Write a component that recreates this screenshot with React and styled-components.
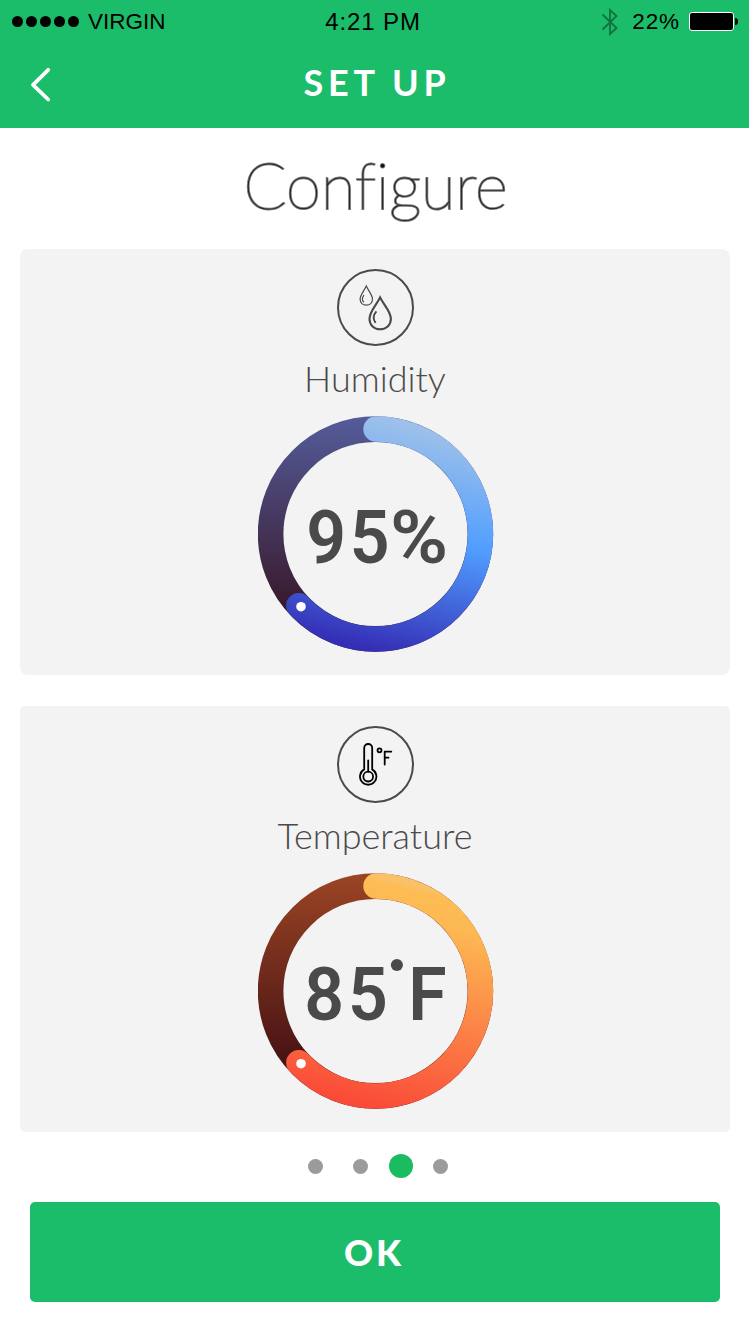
import React from "react";
import styled, { createGlobalStyle } from "styled-components";

const GREEN = "#1bbc6a";

const GlobalStyle = createGlobalStyle`
  * { box-sizing: border-box; }
  body { margin: 0; background: #fff; font-family: Lato, "Liberation Sans", sans-serif; }
`;

const Screen = styled.main`
  display: flex;
  flex-direction: column;
  width: 750px;
  height: 1334px;
  overflow: hidden;
  background: #fff;
`;

const Header = styled.header`
  height: 128px;
  width: 749px;
  background: ${GREEN};
`;

const StatusBar = styled.div`
  display: grid;
  grid-template-columns: 1fr auto 1fr;
  align-items: center;
  height: 43px;
  padding: 0 11px 0 12px;
  font-family: "Liberation Sans", Arial, sans-serif;
  font-size: 22.5px;
  line-height: 43px;
  color: #000;
`;

const StatusGroup = styled.div`
  display: flex;
  align-items: center;
  justify-content: ${(p) => (p.$end ? "flex-end" : "flex-start")};
`;

const Signal = styled.div`
  display: flex;
  gap: 3px;
  margin-right: 9px;
`;

const SignalDot = styled.i`
  width: 11px;
  height: 11px;
  border-radius: 50%;
  background: #000;
`;

const StatusText = styled.span`
  letter-spacing: ${(p) => p.$spacing || 0}px;
  margin-right: ${(p) => p.$after || 0}px;
`;

const Clock = styled(StatusText)`
  padding-right: 4px;
  font-size: 24px;
`;

const Battery = styled.div`
  width: 45px;
  height: 19px;
  border: 1px solid #fff;
  border-radius: 3px;
  background: #000;
`;

const BatteryTip = styled.div`
  width: 3px;
  height: 7px;
  margin-left: 1px;
  border-radius: 0 3px 3px 0;
  background: #000;
`;

const NavBar = styled.div`
  display: grid;
  grid-template-columns: 60px 1fr 60px;
  align-items: center;
  height: 83px;
`;

const BackButton = styled.button`
  display: flex;
  padding: 0 0 0 29px;
  border: 0;
  background: none;
`;

const NavTitle = styled.h1`
  margin: 0;
  padding: 0 0 5px 5px;
  color: #fff;
  font-size: 36px;
  font-weight: 700;
  line-height: 44px;
  letter-spacing: 4.7px;
  text-align: center;
`;

const Heading = styled.h2`
  height: 121px;
  margin: 0;
  padding-left: 1px;
  color: #101010;
  font-size: 63.3px;
  font-weight: 100;
  font-variant-ligatures: none;
  line-height: 114px;
  text-align: center;
  -webkit-text-stroke: 2px #747474;
  paint-order: stroke fill;
`;

const Cards = styled.section`
  display: flex;
  flex-direction: column;
  gap: 31px;
  padding: 0 20px;
`;

const Card = styled.article`
  display: flex;
  flex-direction: column;
  align-items: center;
  height: 426px;
  padding: 20px 0 0 1px;
  border-radius: ${(p) => p.$radius}px;
  background: #f3f3f3;
`;

const IconCircle = styled.div`
  width: 77px;
  height: 77px;
  border: 2px solid #4a4a4a;
  border-radius: 50%;
  svg { display: block; }
`;

const Label = styled.h3`
  height: 70px;
  margin: 0;
  padding-right: 1px;
  color: #4a4a4a;
  font-size: 36px;
  font-weight: 300;
  line-height: 64px;
`;

const Dial = styled.div`
  display: grid;
  width: 236px;
  height: 236px;
  place-items: center;
  > * { grid-area: 1 / 1; }
`;

const Value = styled.div`
  display: flex;
  padding: 5px 0 0 4px;
  color: #4a4a4a;
  font-family: Roboto, "Liberation Sans", sans-serif;
  font-size: 75px;
  font-weight: 600;
  line-height: 80px;
  letter-spacing: 4px;
  transform: scaleX(0.93);
`;

const Percent = styled.span`
  margin: 0 3px 0 -4px;
  transform: scaleX(1.13);
  transform-origin: left;
`;

const Degree = styled.i`
  width: 13px;
  height: 12px;
  margin: 5px 6px 0 -1px;
  border-radius: 50%;
  background: #4a4a4a;
`;

const Pager = styled.nav`
  display: flex;
  align-items: center;
  height: 70px;
  padding: 0 0 2px 308px;
`;

const PageDot = styled.i`
  width: ${(p) => (p.$active ? 24 : 15)}px;
  height: ${(p) => (p.$active ? 24 : 15)}px;
  margin-right: ${(p) => p.$gap}px;
  border-radius: 50%;
  background: ${(p) => (p.$active ? "#1bbc60" : "#9b9b9b")};
`;

const OkButton = styled.button`
  height: 100px;
  margin: 0 30px;
  padding: 0 2px 0 0;
  border: 0;
  border-radius: 5px;
  background: ${GREEN};
  color: #fff;
  font-family: Lato, sans-serif;
  font-size: 36px;
  font-weight: 900;
  letter-spacing: 3px;
`;

function Gauge({ id, track, progress, children }) {
  return (
    <Dial>
      <svg width="236" height="236" viewBox="0 0 236 236">
        <defs>
          <linearGradient id={id + "t"} gradientUnits="userSpaceOnUse" x1="118" y1="0" x2="118" y2="195">
            <stop offset="0" stopColor={track[0]} />
            <stop offset="1" stopColor={track[1]} />
          </linearGradient>
          <linearGradient id={id + "p"} gradientUnits="userSpaceOnUse" x1="146" y1="9" x2="93" y2="230">
            {progress.map(([offset, color]) => (
              <stop key={offset} offset={offset} stopColor={color} />
            ))}
          </linearGradient>
        </defs>
        <circle cx="117.5" cy="118" r="104.9" fill="none" stroke={`url(#${id}t)`} strokeWidth="25.6" />
        <path
          d="M118 13A105 105 0 1 1 40.8 189.7"
          fill="none"
          stroke={`url(#${id}p)`}
          strokeWidth="25.4"
          strokeLinecap="round"
        />
        <circle cx="43" cy="190.7" r="4.8" fill="#fff" />
      </svg>
      <Value>{children}</Value>
    </Dial>
  );
}

function DropsIcon() {
  return (
    <svg width="73" height="73" viewBox="0 0 73 73" fill="none" stroke="#4a4a4a">
      <path strokeWidth="1.2" d="M27.3 15C25.3 19.5 21.1 24 21.1 28.1C21.1 32 23.8 34.2 27.3 34.2S33.5 32 33.5 28.1C33.5 24 29.3 19.5 27.3 15Z" />
      <path strokeWidth="1.2" d="M25 24C22.8 27 22.9 29.5 24.8 31.3" />
      <path strokeWidth="2.1" d="M41.1 26.4C37.9 33.4 30.5 40.4 30.5 47.8C30.5 54.2 35.2 58.3 41.1 58.3S51.9 54.2 51.9 47.8C51.9 40.4 44.4 33.4 41.1 26.4Z" />
      <path strokeWidth="1.9" d="M37.4 40.4C34.1 44.2 34.1 48.6 36.6 51.8" />
    </svg>
  );
}

function ThermometerIcon() {
  return (
    <svg width="73" height="73" viewBox="0 0 73 73" fill="none" stroke="#000" strokeWidth="1.8" strokeLinecap="round" strokeLinejoin="round">
      <path d="M25.2 41.4V20A4 4 0 0 1 33.2 20V41.4A8.2 8.2 0 1 1 25.2 41.4Z" />
      <circle cx="29.2" cy="48.6" r="4.9" />
      <path d="M29.2 32.5V43.5" />
      <circle cx="40.5" cy="22.3" r="2" />
      <path d="M45.7 36.5V23.7H52.3M45.9 29.7H49.5" />
    </svg>
  );
}

export default function App() {
  return (
    <>
      <GlobalStyle />
      <Screen>
        <Header>
          <StatusBar>
            <StatusGroup>
              <Signal>
                {[0, 1, 2, 3, 4].map((n) => <SignalDot key={n} />)}
              </Signal>
              <StatusText>VIRGIN</StatusText>
            </StatusGroup>
            <Clock $spacing={0.9}>4:21 PM</Clock>
            <StatusGroup $end>
              <svg width="18" height="28" viewBox="0 0 18 28" fill="none" stroke="#11713f" strokeWidth="1.8" style={{ marginRight: 13 }}>
                <path d="M1.5 6.5L15.5 20L9 26V2L15.5 8L1.5 21.5" />
              </svg>
              <StatusText $spacing={0.9} $after={9}>22%</StatusText>
              <Battery />
              <BatteryTip />
            </StatusGroup>
          </StatusBar>
          <NavBar>
            <BackButton aria-label="Back">
              <svg width="24" height="36" viewBox="0 0 24 36" fill="none" stroke="#fff" strokeWidth="3.8" strokeLinecap="round" strokeLinejoin="round">
                <path d="M19.2 2.8L4 17.8L19.2 32.5" />
              </svg>
            </BackButton>
            <NavTitle>SET UP</NavTitle>
          </NavBar>
        </Header>
        <Heading>Configure</Heading>
        <Cards>
          <Card $radius={8}>
            <IconCircle><DropsIcon /></IconCircle>
            <Label>Humidity</Label>
            <Gauge
              id="humidity"
              track={["#545c9b", "#391829"]}
              progress={[[0, "#9cc0ea"], [0.46, "#509dff"], [1, "#342db5"]]}
            >
              95<Percent>%</Percent>
            </Gauge>
          </Card>
          <Card $radius={5}>
            <IconCircle><ThermometerIcon /></IconCircle>
            <Label>Temperature</Label>
            <Gauge
              id="temperature"
              track={["#9b4524", "#451114"]}
              progress={[[0, "#f9c26a"], [0.03, "#fdbc54"], [0.14, "#fdb953"], [1, "#fa4a38"]]}
            >
              85<Degree />F
            </Gauge>
          </Card>
        </Cards>
        <Pager>
          <PageDot $gap={30} />
          <PageDot $gap={21} />
          <PageDot $active $gap={20} />
          <PageDot $gap={0} />
        </Pager>
        <OkButton>OK</OkButton>
      </Screen>
    </>
  );
}
